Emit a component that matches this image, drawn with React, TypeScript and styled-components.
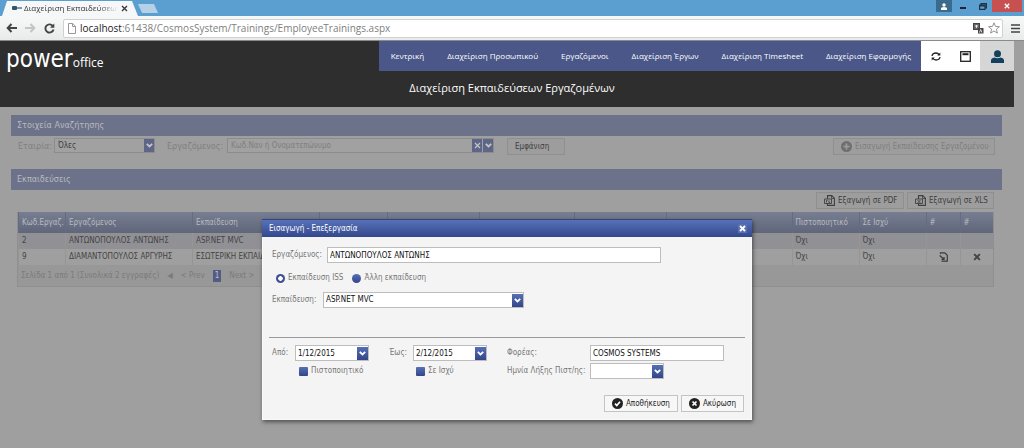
import React, { useState } from "react";
import styled, { createGlobalStyle, css } from "styled-components";

const ui = '"DejaVu Sans Condensed", "DejaVu Sans", sans-serif';
const web = '"Open Sans", "Noto Sans", sans-serif';

const GlobalStyle = createGlobalStyle`
  * { box-sizing: border-box; }
  body { margin: 0; background: #9f9f9f; font-family: ${ui}; font-size: 8px; line-height: 12px; color: #000; }
  button, input, select { font: inherit; color: inherit; margin: 0; padding: 0; border: 0; border-radius: 0; background: none; min-width: 0; }
  a { color: inherit; text-decoration: none; }
  svg { display: block; flex: none; }
`;

const Screen = styled.div`
  min-height: 100vh;
  display: flex;
  flex-direction: column;
  position: relative;
`;

/* ---- browser window ---- */
const TabStrip = styled.div`
  height: 16px;
  display: flex;
  justify-content: space-between;
  background: #5b9fd1;
`;
const Tab = styled.div`
  display: flex;
  align-items: center;
  width: 136px;
  padding-left: 10px;
  background: #f6f7f8;
  clip-path: polygon(0 100%, 5px 1px, 130px 1px, 100% 100%);
  font: 8px/16px ${web};
  color: #333;
`;
const TabTitle = styled.span`
  width: 94px;
  margin: 0 3px 0 2px;
  overflow: hidden;
  white-space: nowrap;
  mask-image: linear-gradient(to right, #000 80%, transparent);
`;
const TabGroup = styled.div`
  display: flex;
  padding-left: 2px;
`;
const NewTab = styled.button`
  width: 20px;
  height: 9px;
  margin-top: 4px;
  background: #b4d1e8;
  clip-path: polygon(0 0, 80% 0, 100% 100%, 20% 100%);
`;
const WindowButtons = styled.div`
  display: flex;
  align-items: flex-start;
  padding-right: 2px;
`;
const WindowButton = styled.button<{ $bg?: string; $w: number }>`
  width: ${(p) => p.$w}px;
  height: 12px;
  display: grid;
  place-items: center;
  background: ${(p) => p.$bg || "transparent"};
`;
const Toolbar = styled.div`
  height: 25px;
  display: flex;
  align-items: center;
  padding: 0 4px 0 6px;
  background: linear-gradient(#f7f8f8, #e9eaea);
  border-bottom: 1px solid #8a8a8a;
`;
const ToolButton = styled.button`
  width: 19px;
  height: 18px;
  display: grid;
  place-items: center start;
`;
const Address = styled.div`
  flex: 1;
  height: 19px;
  display: flex;
  align-items: center;
  gap: 4px;
  padding: 0 2px 0 4px;
  background: #fff;
  border: 1px solid #cfd1d3;
  border-radius: 2px;
`;
const Url = styled.div`
  flex: 1;
  font: 10px/16px ${web};
  color: #808080;
  white-space: nowrap;
  b { font-weight: 400; color: #222; }
`;
const MenuButton = styled.button`
  margin-left: 8px;
`;

/* ---- site header ---- */
const Header = styled.header`
  margin-right: 10px;
  background: #2e2e2e;
  color: #fff;
  height: 66px;
`;
const HeaderTop = styled.div`
  display: flex;
  justify-content: space-between;
  height: 30px;
`;
const Logo = styled.a`
  padding-left: 6px;
  font: 24px/36px ${ui};
  color: #fff;
  small { font: 12px/16px ${web}; }
`;
const Nav = styled.nav`
  display: flex;
`;
const NavLinks = styled.div`
  display: flex;
  justify-content: space-between;
  gap: 23px;
  padding: 0 10px 0 12px;
  background: #4a5788;
  font: 500 8px/30px ${web};
  white-space: nowrap;
`;
const NavIcon = styled.button<{ $bg: string; $w: number }>`
  width: ${(p) => p.$w}px;
  display: grid;
  place-items: center;
  background: ${(p) => p.$bg};
`;
const PageTitle = styled.h1`
  margin: 0;
  padding-left: 10px;
  text-align: center;
  font: 400 11px/34px ${web};
`;

/* ---- dimmed page ---- */
const Main = styled.main`
  padding: 8px 22px 0 11px;
  color: #555;
`;
const Bar = styled.h2`
  margin: 0;
  height: 21px;
  padding-left: 6px;
  background: #6c7289;
  color: #b9bac0;
  font: 400 9px/21px ${ui};
`;
const Filters = styled.div`
  display: flex;
  align-items: flex-start;
  height: 33px;
  padding: 2px 7px 0 7px;
  color: #7f7f7f;
  font-size: 9px;
  line-height: 16px;
`;
const DimLabel = styled.label<{ $w: number }>`
  width: ${(p) => p.$w}px;
  white-space: nowrap;
`;
const Spacer = styled.div<{ $w?: number }>`
  ${(p) => (p.$w ? css`width: ${p.$w}px;` : css`flex: 1;`)}
`;
const DimField = styled.div<{ $w: number }>`
  display: flex;
  align-items: center;
  width: ${(p) => p.$w}px;
  height: 15px;
  padding: 0 0 0 3px;
  border: 1px solid #8c8c8c;
  background: #a1a1a1;
  font-size: 8px;
  line-height: 12px;
  color: #3c3c3c;
  input, select { flex: 1; appearance: none; height: 12px; outline: 0; }
  input::placeholder { color: #808080; opacity: 1; }
`;
const DimArrow = styled.button`
  width: 10px;
  height: 13px;
  display: grid;
  place-items: center;
  background: #5e6688;
  color: #c4c4c8;
  & + & { margin-left: 1px; }
`;
const DimButton = styled.button<{ $w?: number; $faint?: boolean }>`
  display: flex;
  align-items: center;
  justify-content: ${(p) => (p.$w ? "flex-start" : "center")};
  gap: 3px;
  ${(p) => p.$w && css`width: ${p.$w}px;`}
  height: 17px;
  padding: 0 7px;
  border: 1px solid #8f8f8f;
  background: #9d9d9d;
  font-size: 8px;
  line-height: 14px;
  white-space: nowrap;
  color: ${(p) => (p.$faint ? "#7f7f7f" : "#404040")};
  svg { color: ${(p) => (p.$faint ? "#6f6f6f" : "#404040")}; }
`;
const Exports = styled.div`
  display: flex;
  justify-content: flex-end;
  gap: 3px;
  padding: 2px 8px 3px 0;
`;
const Grid = styled.div`
  margin: 0 8px 0 6px;
  border: 1px solid #8f8f8f;
  border-top: 0;
  background: #989898;
`;
const Table = styled.table`
  width: 100%;
  table-layout: fixed;
  border-collapse: collapse;
  th {
    height: 21px;
    padding: 0 3px;
    text-align: left;
    font-weight: 400;
    background: linear-gradient(#777e92, #5f6679);
    color: #b9bac0;
    white-space: nowrap;
    overflow: hidden;
    border-left: 1px solid #666c80;
  }
  td {
    height: 16px;
    padding: 0 3px;
    white-space: nowrap;
    overflow: hidden;
    border-left: 1px solid #959595;
    color: #444;
  }
  tbody tr { background: #9f9f9f; }
  tbody tr:first-child { background: #919195; }
`;
const IconButton = styled.button`
  display: grid;
  place-items: center;
  width: 100%;
`;
const Pager = styled.div`
  display: flex;
  align-items: center;
  gap: 8px;
  height: 21px;
  padding-left: 3px;
  color: #7b7b7b;
  white-space: nowrap;
  b { font-weight: 400; background: #525c86; color: #c0c0c4; padding: 0 2px; }
`;

/* ---- dialog ---- */
const Overlay = styled.div`
  position: absolute;
  top: 219px;
  left: 0;
  right: 10px;
  display: flex;
  justify-content: center;
`;
const Dialog = styled.section`
  width: 490px;
  background: #f4f4f4;
  border: 1px solid #fafafa;
  border-top: 0;
  box-shadow: 1px 2px 4px rgba(0, 0, 0, 0.5);
  color: #777;
`;
const DialogTitle = styled.header`
  display: flex;
  align-items: center;
  justify-content: space-between;
  height: 18px;
  margin: 0 -1px;
  padding: 0 5px 0 7px;
  border-top: 1px solid #33457f;
  background: linear-gradient(#5772b8, #34478d);
  color: #fff;
  h2 { margin: 0; font: inherit; }
`;
const CloseButton = styled.button`
  width: 9px;
  height: 9px;
  display: grid;
  place-items: center;
  background: #5a70ae;
`;
const Form = styled.form`
  padding: 10px 6px 7px;
`;
const Row = styled.div<{ $gap?: number }>`
  display: flex;
  align-items: center;
  padding-left: 3px;
  margin-bottom: ${(p) => p.$gap || 0}px;
  white-space: nowrap;
`;
const Label = styled.label<{ $w?: number }>`
  ${(p) => p.$w && css`width: ${p.$w}px;`}
  white-space: nowrap;
`;
const Field = styled.div<{ $w: number }>`
  display: flex;
  align-items: center;
  width: ${(p) => p.$w}px;
  height: 16px;
  padding-left: 2px;
  border: 1px solid #bdbdbd;
  background: #fff;
  color: #111;
  input, select { flex: 1; height: 13px; appearance: none; outline: 0; }
`;
const Arrow = styled.button`
  width: 11px;
  height: 13px;
  display: grid;
  place-items: center;
  background: linear-gradient(#5670b4, #33458a);
  color: #fff;
`;
const Choice = styled.label`
  display: flex;
  align-items: center;
  gap: 3px;
  margin-right: 9px;
  input {
    appearance: none;
    width: 9px;
    height: 9px;
    background: linear-gradient(#5670b4, #33458a);
  }
  input[type="radio"] { border-radius: 50%; }
  input[type="radio"]:checked { background: radial-gradient(circle closest-side, #fff 0 45%, #3d5096 55%); }
  input[type="checkbox"] { border-radius: 1px; }
  input[type="checkbox"]:checked { box-shadow: inset 0 0 0 2px #3d5096; background: #fff; }
`;
const Divider = styled.hr`
  margin: 29px 0 7px;
  border: 0;
  border-top: 1px solid #9a9a9a;
`;
const Details = styled.div`
  display: grid;
  grid-template-columns: 23px 94px 24px 94px 83px 1fr;
  grid-auto-rows: 16px;
  row-gap: 2px;
  align-items: center;
  padding-left: 3px;
`;
const CheckCell = styled.div`
  grid-column: span 2;
  padding-left: 27px;
`;
const Actions = styled.div`
  display: flex;
  justify-content: flex-end;
  gap: 3px;
  margin-top: 16px;
  padding-right: 1px;
`;
const Button = styled.button`
  display: flex;
  align-items: center;
  gap: 3px;
  height: 17px;
  padding: 0 7px;
  border: 1px solid #c4c4c4;
  background: #f7f7f7;
  color: #222;
  white-space: nowrap;
`;

const Chevron = () => (
  <svg width="7" height="5" viewBox="0 0 7 5" fill="none" stroke="currentColor" strokeWidth="1.8"><path d="M.8.8 3.5 3.4 6.2.8" /></svg>
);
const Cross = ({ size = 7, width = 1.6 }: { size?: number; width?: number }) => (
  <svg width={size} height={size} viewBox="0 0 7 7" fill="none" stroke="currentColor" strokeWidth={width}><path d="m1 1 5 5M6 1 1 6" /></svg>
);
const Disc = ({ d, hole }: { d: string; hole: string }) => (
  <svg width="11" height="11" viewBox="0 0 11 11" fill="none"><circle cx="5.5" cy="5.5" r="5.5" fill="currentColor" /><path d={d} stroke={hole} strokeWidth="1.7" /></svg>
);
const FileIcon = ({ mark }: { mark: string }) => (
  <svg width="11" height="11" viewBox="0 0 11 11" fill="none" stroke="currentColor">
    <path d="M3.5 4V.6H7.8L10.4 3.2V10.4H3.5V8.5" strokeWidth="1.1" />
    <path d="M7.5.6V3.5H10.4" strokeWidth=".8" />
    <path d="M3.5 4H.5V8.5H7.5V4z" strokeWidth=".9" />
    <path d={mark} strokeWidth=".9" />
  </svg>
);

const trainings = [
  { id: 2, name: "ΑΝΤΩΝΟΠΟΥΛΟΣ ΑΝΤΩΝΗΣ", course: "ASP.NET MVC", tools: false },
  { id: 9, name: "ΔΙΑΜΑΝΤΟΠΟΥΛΟΣ ΑΡΓΥΡΗΣ", course: "ΕΣΩΤΕΡΙΚΗ ΕΚΠΑΙΔΕΥΣΗ", tools: true },
];
const links = ["Κεντρική", "Διαχείριση Προσωπικού", "Εργαζόμενοι", "Διαχείριση Έργων", "Διαχείριση Timesheet", "Διαχείριση Εφαρμογής"];
const columns = [47, 127, 127, 68, 92, 95, 92, 0, 67, 67, 34, 33];
const headings = ["Κωδ.Εργαζ.", "Εργαζόμενος", "Εκπαίδευση", "", "", "", "", "", "Πιστοποιητικό", "Σε Ισχύ", "#", "#"];

function BrowserBar() {
  return (
    <>
      <TabStrip>
        <TabGroup>
          <Tab>
            <svg width="10" height="6" viewBox="0 0 10 6"><rect y="1" width="5" height="4" rx="1" fill="#356" /><path d="M5 3h5" stroke="#579" strokeWidth="1.5" /></svg>
            <TabTitle>Διαχείριση Εκπαιδεύσεων</TabTitle>
            <Cross size={7} width={1.3} />
          </Tab>
          <NewTab aria-label="New tab" />
        </TabGroup>
        <WindowButtons>
          <WindowButton $w={16} $bg="#3b6a8d" aria-label="Profile">
            <svg width="6" height="7" viewBox="0 0 6 7" fill="#fff"><circle cx="3" cy="2" r="1.7" /><path d="M0 7V5.5Q0 4 3 4t3 1.5V7z" /></svg>
          </WindowButton>
          <WindowButton $w={22} aria-label="Minimize"><svg width="6" height="6" viewBox="0 0 6 6"><path d="M0 5h6" stroke="#223" strokeWidth="2" /></svg></WindowButton>
          <WindowButton $w={18} aria-label="Restore">
            <svg width="8" height="7" viewBox="0 0 8 7" fill="none" stroke="#234" strokeWidth="1.2"><path d="M2 2V.6h5.4V5H6M.6 2H6v4.4H.6zM.6 3H6" /></svg>
          </WindowButton>
          <WindowButton $w={30} $bg="#c75050" aria-label="Close"><svg width="6" height="6" viewBox="0 0 6 6"><path d="m.8.8 4.4 4.4M5.2.8.8 5.2" stroke="#fff" strokeWidth="1.3" /></svg></WindowButton>
        </WindowButtons>
      </TabStrip>
      <Toolbar>
        <ToolButton aria-label="Back"><svg width="11" height="10" viewBox="0 0 11 10" fill="none" stroke="#444" strokeWidth="2"><path d="M5.5 1 1.7 5l3.8 4M2 5h9" /></svg></ToolButton>
        <ToolButton aria-label="Forward"><svg width="11" height="10" viewBox="0 0 11 10" fill="none" stroke="#c4c4c4" strokeWidth="2"><path d="M5.5 1 9.3 5 5.5 9M9 5H0" /></svg></ToolButton>
        <ToolButton aria-label="Reload"><svg width="11" height="11" viewBox="0 0 11 11" fill="none"><path d="M9 3.3A4.1 4.1 0 1 0 9.5 6.5" stroke="#444" strokeWidth="1.9" /><path d="M10.3.5v4.3H6z" fill="#444" /></svg></ToolButton>
        <Address>
          <svg width="8" height="11" viewBox="0 0 8 11" fill="#fff" stroke="#999"><path d="M.5.5h4.2L7.5 3.3v7.2h-7zM4.5.5v3h3" /></svg>
          <Url><b>localhost</b>:61438/CosmosSystem/Trainings/EmployeeTrainings.aspx</Url>
          <svg width="11" height="11" viewBox="0 0 11 11" fill="none"><rect x=".5" y=".5" width="6" height="6" fill="#666" stroke="#444" /><path d="M2 3h3M3.5 2v3" stroke="#fff" strokeWidth=".8" /><rect x="5" y="5" width="5.5" height="5.5" fill="#444" /><path d="m6.5 9.5 1.2-3 1.2 3" stroke="#fff" strokeWidth=".8" /></svg>
          <svg width="12" height="12" viewBox="0 0 12 12" fill="#fff" stroke="#888" strokeWidth=".9"><path d="m6 .8 1.5 3.6 3.9.3-3 2.5 1 3.9L6 9 2.6 11.1l1-3.9-3-2.5 3.9-.3z" /></svg>
        </Address>
        <MenuButton aria-label="Menu"><svg width="9" height="9" viewBox="0 0 9 9" stroke="#444" strokeWidth="1.7"><path d="M0 1h9M0 4.5h9M0 8h9" /></svg></MenuButton>
      </Toolbar>
    </>
  );
}

function SiteHeader() {
  return (
    <Header>
      <HeaderTop>
        <Logo href="#">power<small>office</small></Logo>
        <Nav>
          <NavLinks>{links.map((l) => <a href="#" key={l}>{l}</a>)}</NavLinks>
          <NavIcon $bg="#fff" $w={30} aria-label="Refresh">
            <svg width="10" height="9" viewBox="0 0 10 9" fill="none" stroke="#222" strokeWidth="1.3"><path d="M1 4Q1.5 1 5 1q2 0 3.3 1.8M9 5Q8.5 8 5 8 3 8 1.7 6.2" /><path d="M9.3.5v3H6.3zM.7 8.5v-3h3z" fill="#222" stroke="none" /></svg>
          </NavIcon>
          <NavIcon $bg="#fff" $w={29} aria-label="Window">
            <svg width="11" height="11" viewBox="0 0 11 11" fill="none" stroke="#222"><rect x=".7" y=".7" width="9.6" height="9.6" strokeWidth="1.3" /><path d="M2.5 3.2h6" strokeWidth="2" /></svg>
          </NavIcon>
          <NavIcon $bg="#d6d6d6" $w={34} aria-label="Account">
            <svg width="13" height="13" viewBox="0 0 13 13" fill="#12405e"><circle cx="6.5" cy="3.7" r="3.5" /><path d="M0 13v-2.5Q0 8 3.5 7.5q3 1.5 6 0Q13 8 13 10.5V13z" /></svg>
          </NavIcon>
        </Nav>
      </HeaderTop>
      <PageTitle>Διαχείριση Εκπαιδεύσεων Εργαζομένων</PageTitle>
    </Header>
  );
}

function TrainingsPage() {
  return (
    <Main>
      <Bar>Στοιχεία Αναζήτησης</Bar>
      <Filters>
        <DimLabel $w={36} htmlFor="company">Εταιρία:</DimLabel>
        <DimField $w={101}><select id="company"><option>Όλες</option></select><DimArrow as="span"><Chevron /></DimArrow></DimField>
        <Spacer $w={12} />
        <DimLabel $w={60} htmlFor="who">Εργαζόμενος:</DimLabel>
        <DimField $w={267}><input id="who" placeholder="Κωδ.Ναν ή Ονοματεπώνυμο" /><DimArrow aria-label="Clear"><Cross width={1.2} /></DimArrow><DimArrow aria-label="Open"><Chevron /></DimArrow></DimField>
        <Spacer $w={13} />
        <DimButton $w={58}>Εμφάνιση</DimButton>
        <Spacer />
        <DimButton $w={162} $faint><Disc d="M5.5 2.5v6M2.5 5.5h6" hole="#9d9d9d" />Εισαγωγή Εκπαίδευσης Εργαζομένου</DimButton>
      </Filters>
      <Bar>Εκπαιδεύσεις</Bar>
      <Exports>
        <DimButton $w={88}><FileIcon mark="M2.5 7.5v-2h1M5 5.5v2h1" />Εξαγωγή σε PDF</DimButton>
        <DimButton $w={87}><FileIcon mark="m2.5 5 3 3M5.5 5l-3 3" />Εξαγωγή σε XLS</DimButton>
      </Exports>
      <Grid>
        <Table>
          <colgroup>{columns.map((w, i) => <col key={i} width={w || undefined} />)}</colgroup>
          <thead><tr>{headings.map((h, i) => <th key={i}>{h}</th>)}</tr></thead>
          <tbody>
            {trainings.map((t) => (
              <tr key={t.id}>
                <td>{t.id}</td><td>{t.name}</td><td>{t.course}</td>
                <td /><td /><td /><td /><td />
                <td>Όχι</td><td>Όχι</td>
                <td>{t.tools && <IconButton aria-label="Edit"><svg width="9" height="10" viewBox="0 0 9 10" fill="none" stroke="#3c3c3c" strokeWidth="1.2"><path d="M1.5 2V.8H5.8L8.3 3.2V9.2H2.5" /><path d="M.7 3.5 5 7.5M5 5v2.5H2.5" /></svg></IconButton>}</td>
                <td>{t.tools && <IconButton aria-label="Delete"><Cross size={8} width={1.7} /></IconButton>}</td>
              </tr>
            ))}
          </tbody>
        </Table>
        <Pager><span>Σελίδα 1 από 1 (Συνολικά 2 εγγραφές)</span><span>◀</span><span>&lt; Prev</span><b>1</b><span>Next &gt;</span><span>▶</span></Pager>
      </Grid>
    </Main>
  );
}

function EditDialog() {
  const [kind, setKind] = useState("iss");
  return (
    <Overlay>
      <Dialog role="dialog" aria-labelledby="dialog-title">
        <DialogTitle>
          <h2 id="dialog-title">Εισαγωγή - Επεξεργασία</h2>
          <CloseButton aria-label="Close"><Cross size={7} width={1.8} /></CloseButton>
        </DialogTitle>
        <Form onSubmit={(e) => e.preventDefault()}>
          <Row $gap={9}>
            <Label $w={55} htmlFor="employee">Εργαζόμενος:</Label>
            <Field $w={334}><input id="employee" defaultValue="ΑΝΤΩΝΟΠΟΥΛΟΣ ΑΝΤΩΝΗΣ" /></Field>
          </Row>
          <Row $gap={8}>
            <Spacer $w={4} />
            <Choice><input type="radio" name="kind" checked={kind === "iss"} onChange={() => setKind("iss")} />Εκπαίδευση ISS</Choice>
            <Choice><input type="radio" name="kind" checked={kind === "other"} onChange={() => setKind("other")} />Άλλη εκπαίδευση</Choice>
          </Row>
          <Row>
            <Label $w={51} htmlFor="course">Εκπαίδευση:</Label>
            <Field $w={201}><select id="course"><option>ASP.NET MVC</option></select><Arrow as="span"><Chevron /></Arrow></Field>
          </Row>
          <Divider />
          <Details>
            <Label htmlFor="from">Από:</Label>
            <Field $w={74}><input id="from" defaultValue="1/12/2015" /><Arrow type="button" aria-label="Pick start"><Chevron /></Arrow></Field>
            <Label htmlFor="to">Έως:</Label>
            <Field $w={74}><input id="to" defaultValue="2/12/2015" /><Arrow type="button" aria-label="Pick end"><Chevron /></Arrow></Field>
            <Label htmlFor="provider">Φορέας:</Label>
            <Field $w={134}><input id="provider" defaultValue="COSMOS SYSTEMS" /></Field>
            <CheckCell><Choice><input type="checkbox" />Πιστοποιητικό</Choice></CheckCell>
            <CheckCell><Choice><input type="checkbox" />Σε Ισχύ</Choice></CheckCell>
            <Label htmlFor="expiry">Ημνία Λήξης Πιστ/ης:</Label>
            <Field $w={74}><input id="expiry" /><Arrow type="button" aria-label="Pick expiry"><Chevron /></Arrow></Field>
          </Details>
          <Actions>
            <Button type="submit"><Disc d="m3 5.6 1.8 1.9 3.2-3.8" hole="#fff" />Αποθήκευση</Button>
            <Button type="button"><Disc d="m3.5 3.5 4 4M7.5 3.5l-4 4" hole="#fff" />Ακύρωση</Button>
          </Actions>
        </Form>
      </Dialog>
    </Overlay>
  );
}

export default function App() {
  return (
    <Screen>
      <GlobalStyle />
      <BrowserBar />
      <SiteHeader />
      <TrainingsPage />
      <EditDialog />
    </Screen>
  );
}
